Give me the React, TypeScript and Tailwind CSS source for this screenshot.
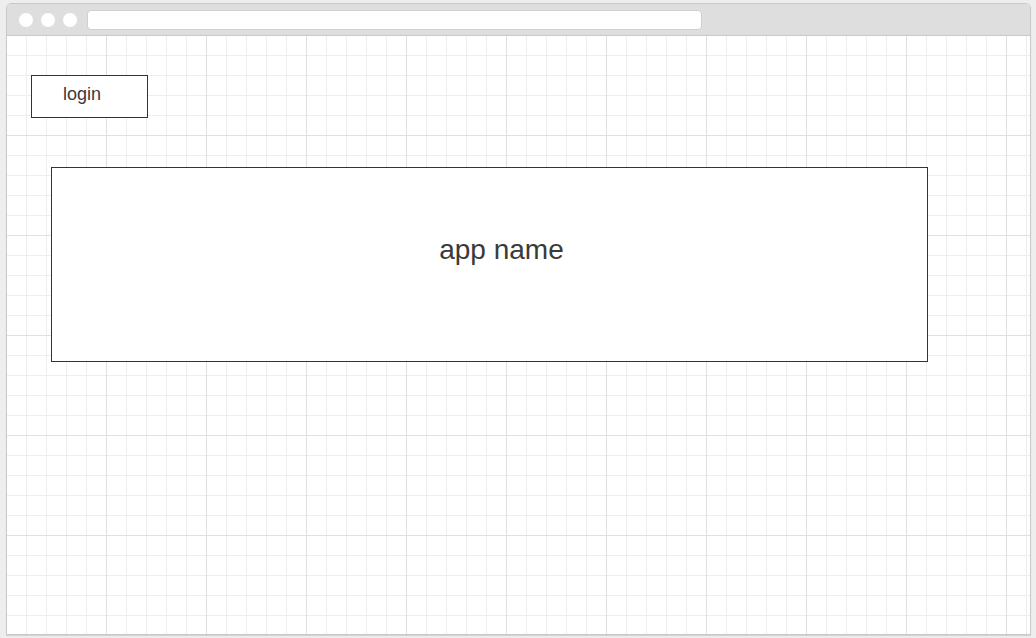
const gridBg =
  "bg-[image:linear-gradient(to_right,transparent_99px,#e0e0e0_99px),linear-gradient(to_bottom,transparent_99px,#e0e0e0_99px),linear-gradient(to_right,transparent_19px,#eeeeee_19px),linear-gradient(to_bottom,transparent_19px,#eeeeee_19px)] bg-[size:100px_100px,100px_100px,20px_20px,20px_20px]";

export default function App() {
  return (
    <div className="w-[1036px] h-[638px] bg-[#eeeeee] pt-[3px] pl-[6px] font-['Liberation_Sans',Arial,sans-serif] text-[#3a3a3a]">
      {/* browser window */}
      <div className="w-[1025px] h-[632px] flex flex-col border border-[#c9c9c9] rounded-t-[5px] bg-white shadow-[0_1px_1px_#d0d0d0] overflow-hidden">
        {/* title bar */}
        <div className="h-[32px] shrink-0 bg-[#dedede] border-b border-[#c9c9c9] flex items-center pl-[12px] gap-[8px]">
          <span className="w-[14px] h-[14px] rounded-full bg-white" />
          <span className="w-[14px] h-[14px] rounded-full bg-white" />
          <span className="w-[14px] h-[14px] rounded-full bg-white" />
          <div className="ml-[2px] w-[615px] h-[20px] rounded-[4px] bg-white border border-[#cfcfcf]" />
        </div>

        {/* page */}
        <div className={`flex-1 ${gridBg}`}>
          <div className="pt-[39px] pl-[24px]">
            <div className="w-[117px] h-[43px] border border-[#333] bg-white pl-[31px] pt-[8px] text-[18px] leading-[20px]">
              login
            </div>
          </div>
          <div className="mt-[49px] ml-[44px] w-[877px] h-[195px] border border-[#333] bg-white pt-[66px] pl-[24px] text-center text-[28px] leading-[32px]">
            app name
          </div>
        </div>
      </div>
    </div>
  );
}
